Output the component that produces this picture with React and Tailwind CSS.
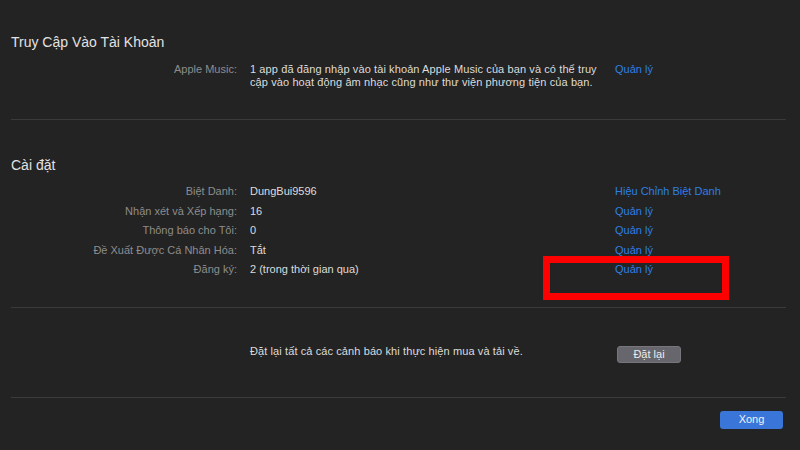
export default function App() {
  const font = { fontFamily: '"Liberation Sans", Arial, sans-serif' };
  const rows = [
    ["Biệt Danh:", "DungBui9596", "Hiệu Chỉnh Biệt Danh"],
    ["Nhận xét và Xếp hạng:", "16", "Quản lý"],
    ["Thông báo cho Tôi:", "0", "Quản lý"],
    ["Đề Xuất Được Cá Nhân Hóa:", "Tắt", "Quản lý"],
    ["Đăng ký:", "2 (trong thời gian qua)", "Quản lý"],
  ];
  return (
    <div
      className="relative w-[800px] h-[450px] overflow-hidden bg-[#232323] flex flex-col"
      style={font}
    >
      {/* Section 1 */}
      <div className="pt-[34px] pl-[11px] text-[14px] leading-[17px] text-[#e2e2e2] whitespace-nowrap">
        Truy Cập Vào Tài Khoản
      </div>
      <div className="mt-[12px] flex text-[11px] leading-[13px] whitespace-nowrap">
        <div className="w-[237px] text-right text-[#8d8d8d]">Apple Music:</div>
        <div className="ml-[13px] w-[365px] text-[#dcdcdc] tracking-[0.1px]">
          1 app đã đăng nhập vào tài khoản Apple Music của bạn và có thể truy
          <br />
          cập vào hoạt động âm nhạc cũng như thư viện phương tiện của bạn.
        </div>
        <div className="text-[#2f7fe3]">Quản lý</div>
      </div>
      <div className="mt-[30px] ml-[11px] w-[775px] h-px bg-[#3a3a3a]" />

      {/* Section 2 */}
      <div className="mt-[37px] pl-[11px] text-[14px] leading-[17px] text-[#e2e2e2] whitespace-nowrap">
        Cài đặt
      </div>
      <div className="mt-[8px] flex flex-col text-[11px] leading-[19.5px] whitespace-nowrap">
        {rows.map(([label, value, link]) => (
          <div key={label} className="flex">
            <div className="w-[237px] text-right text-[#8d8d8d]">{label}</div>
            <div className="ml-[13px] w-[365px] text-[#dcdcdc]">{value}</div>
            <div className="text-[#2f7fe3]">{link}</div>
          </div>
        ))}
      </div>
      <div className="mt-[27px] ml-[11px] w-[775px] h-px bg-[#3a3a3a]" />

      {/* Section 3 */}
      <div className="mt-[37px] flex items-start text-[11px] leading-[13px] whitespace-nowrap">
        <div className="ml-[250px] w-[367px] text-[#dcdcdc] tracking-[0.1px]">
          Đặt lại tất cả các cảnh báo khi thực hiện mua và tải về.
        </div>
        <div className="mt-[1px] w-[64px] h-[17px] rounded-[3px] bg-[#67666d] border border-[#77767d] flex items-center justify-center text-[#ececec]">
          Đặt lại
        </div>
      </div>
      <div className="mt-[34px] ml-[11px] w-[775px] h-px bg-[#3a3a3a]" />

      {/* Section 4 */}
      <div className="mt-[13px] flex justify-end pr-[17px]">
        <div className="w-[63px] h-[18px] rounded-[3px] bg-[#3a75d9] flex items-center justify-center text-[11px] text-[#f2f2f2]">
          Xong
        </div>
      </div>

      {/* Red annotation box */}
      <div className="absolute left-[543px] top-[256px] w-[186px] h-[44px] border-[7px] border-[#ff0000]" />
    </div>
  );
}
